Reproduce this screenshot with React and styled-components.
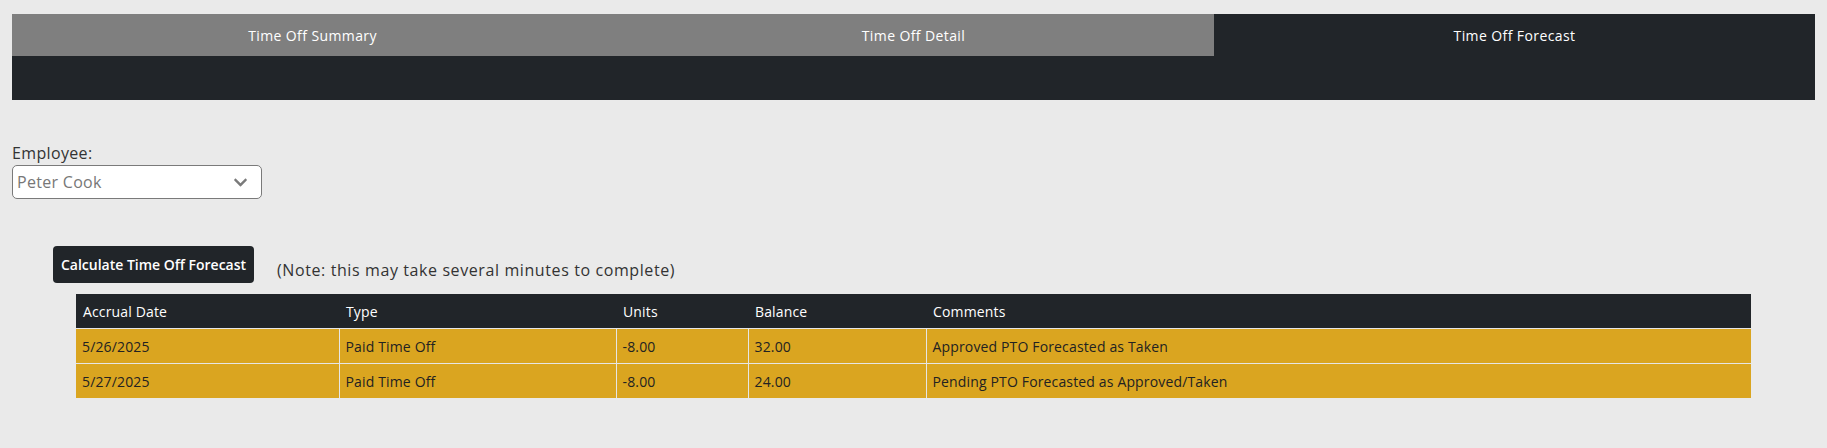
import React from "react";
import styled, { createGlobalStyle } from "styled-components";
import { FaChevronDown } from "react-icons/fa";

const tabs = ["Time Off Summary", "Time Off Detail", "Time Off Forecast"];

const rows = [
  {
    date: "5/26/2025",
    type: "Paid Time Off",
    units: "-8.00",
    balance: "32.00",
    comments: "Approved PTO Forecasted as Taken",
  },
  {
    date: "5/27/2025",
    type: "Paid Time Off",
    units: "-8.00",
    balance: "24.00",
    comments: "Pending PTO Forecasted as Approved/Taken",
  },
];

export default function App() {
  return (
    <Page>
      <GlobalStyle />
      <TabBar>
        <TabRow>
          {tabs.map((t, i) => (
            <Tab key={t} active={i === 2}>
              {t}
            </Tab>
          ))}
        </TabRow>
      </TabBar>

      <Field>
        <Label>Employee:</Label>
        <Select>
          <SelectValue>Peter Cook</SelectValue>
          <FaChevronDown size={15} color="#7a7a7a" />
        </Select>
      </Field>

      <Actions>
        <Button>Calculate Time Off Forecast</Button>
        <Note>(Note: this may take several minutes to complete)</Note>
      </Actions>

      <Table>
        <colgroup>
          <col style={{ width: 263 }} />
          <col style={{ width: 277 }} />
          <col style={{ width: 132 }} />
          <col style={{ width: 178 }} />
          <col />
        </colgroup>
        <thead>
          <tr>
            <Th>Accrual Date</Th>
            <Th>Type</Th>
            <Th>Units</Th>
            <Th>Balance</Th>
            <Th>Comments</Th>
          </tr>
        </thead>
        <tbody>
          {rows.map(r => (
            <tr key={r.date}>
              <Td>{r.date}</Td>
              <Td>{r.type}</Td>
              <Td>{r.units}</Td>
              <Td>{r.balance}</Td>
              <Td>{r.comments}</Td>
            </tr>
          ))}
        </tbody>
      </Table>
    </Page>
  );
}

const GlobalStyle = createGlobalStyle`
  body {
    margin: 0;
    background: #eaeaea;
    font-family: "Open Sans", Arial, sans-serif;
  }
`;

const Page = styled.div`
  padding: 14px 12px 40px;
`;

const TabBar = styled.div`
  background: #212529;
  height: 86px;
`;

const TabRow = styled.div`
  display: grid;
  grid-template-columns: repeat(3, 1fr);
`;

const Tab = styled.div`
  align-items: center;
  background: ${props => (props.active ? "#212529" : "#7f7f7f")};
  color: #fff;
  display: flex;
  font-size: 14px;
  height: 42px;
  justify-content: center;
  letter-spacing: 0.4px;
`;

const Field = styled.div`
  display: flex;
  flex-direction: column;
  margin-top: 43px;
`;

const Label = styled.label`
  color: #333;
  font-size: 16px;
  letter-spacing: 0.35px;
  line-height: 20px;
  margin-bottom: 2px;
`;

const Select = styled.div`
  align-items: center;
  background: #fff;
  border: 1px solid #7a7a7a;
  border-radius: 5px;
  box-sizing: border-box;
  display: flex;
  height: 34px;
  justify-content: space-between;
  padding: 0 13px 0 4px;
  width: 250px;
`;

const SelectValue = styled.span`
  color: #777;
  font-size: 16px;
  letter-spacing: 0.3px;
`;

const Actions = styled.div`
  align-items: center;
  display: flex;
  gap: 23px;
  margin-top: 47px;
  padding-left: 41px;
`;

const Button = styled.button`
  background: #212529;
  border: none;
  border-radius: 4px;
  color: #fff;
  font-family: "Open Sans", Arial, sans-serif;
  font-size: 14px;
  font-weight: 600;
  height: 37px;
  padding: 0 6px;
  white-space: nowrap;
  width: 201px;
`;

const Note = styled.span`
  color: #333;
  font-size: 16px;
  letter-spacing: 0.6px;
  margin-top: 10px;
`;

const Table = styled.table`
  border-collapse: collapse;
  font-size: 14px;
  letter-spacing: 0.15px;
  margin-left: 64px;
  margin-top: 11px;
  table-layout: fixed;
  width: 1675px;
`;

const Th = styled.th`
  background: #212529;
  color: #fff;
  font-weight: 500;
  height: 34px;
  padding: 0 7px;
  text-align: left;
`;

const Td = styled.td`
  background: #daa520;
  border: 1px solid #e6e6e6;
  border-bottom: none;
  color: #222;
  height: 34px;
  padding: 0 6px;

  &:first-child {
    border-left: none;
  }

  &:last-child {
    border-right: none;
  }
`;
